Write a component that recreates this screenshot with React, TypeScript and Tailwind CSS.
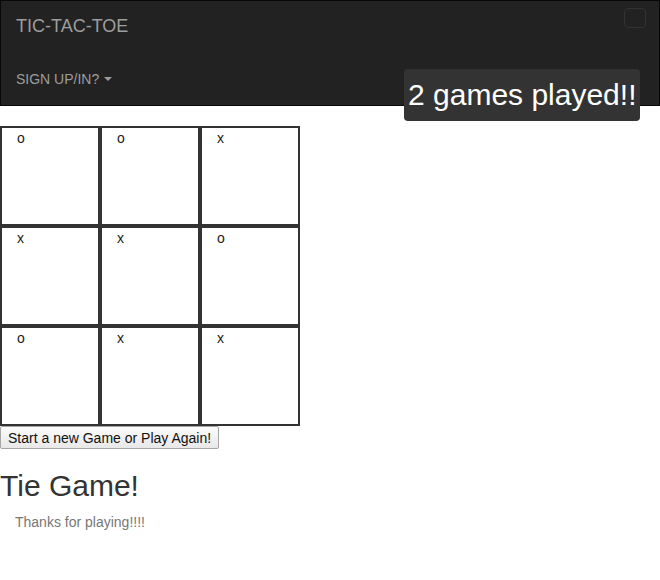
import React from "react";

const board = [
  ["o", "o", "x"],
  ["x", "x", "o"],
  ["o", "x", "x"],
];

export default function App() {
  return (
    <div
      className="relative min-h-[580px] bg-white text-[14px] leading-5 text-[#333]"
      style={{ fontFamily: '"Liberation Sans", Arial, sans-serif' }}
    >
      <nav className="mb-5 border border-[#080808] bg-[#222]">
        <div className="flex h-[50px] items-start justify-between">
          <span className="px-[15px] py-[15px] text-[18px] leading-5 text-[#9d9d9d]">TIC-TAC-TOE</span>
          <button className="mr-[13px] mt-[7px] h-[20px] w-[22px] rounded-[4px] border border-[#333] bg-transparent" />
        </div>
        <ul className="pb-[6.5px] pt-[7.5px]">
          <li>
            <a className="flex items-center px-[15px] py-[10px] text-[14px] leading-5 text-[#9d9d9d]">
              SIGN UP/IN?
              <span className="ml-[5px] mt-[1px] h-0 w-0 border-x-[4px] border-t-[4px] border-x-transparent border-t-[#9d9d9d]" />
            </a>
          </li>
        </ul>
      </nav>

      <div className="absolute left-[404px] top-[69px] rounded-[4px] bg-[#333] px-[4px] pb-[10px] pt-[9px] text-[30px] leading-[33px] text-white">
        2 games played!!
      </div>

      <div className="flex w-[300px] flex-col">
        {board.map((row, r) => (
          <div key={r} className="flex">
            {row.map((c, i) => (
              <div
                key={i}
                className="h-[100px] w-[100px] border-2 border-[#333] pl-[15px] text-[14px] leading-5 text-[#222]"
              >
                {c}
              </div>
            ))}
          </div>
        ))}
      </div>

      <button className="h-[23px] rounded-[2px] border border-[#a6a6a6] bg-gradient-to-b from-[#fbfbfb] to-[#e8e8e8] px-[7px] text-[14px] leading-5 text-[#111]">
        Start a new Game or Play Again!
      </button>

      <h2 className="mt-5 mb-[10px] text-[30px] font-medium leading-[33px] text-[#333]">Tie Game!</h2>
      <p className="pl-[15px] text-[14px] leading-5 text-[#777]">Thanks for playing!!!!</p>
    </div>
  );
}
